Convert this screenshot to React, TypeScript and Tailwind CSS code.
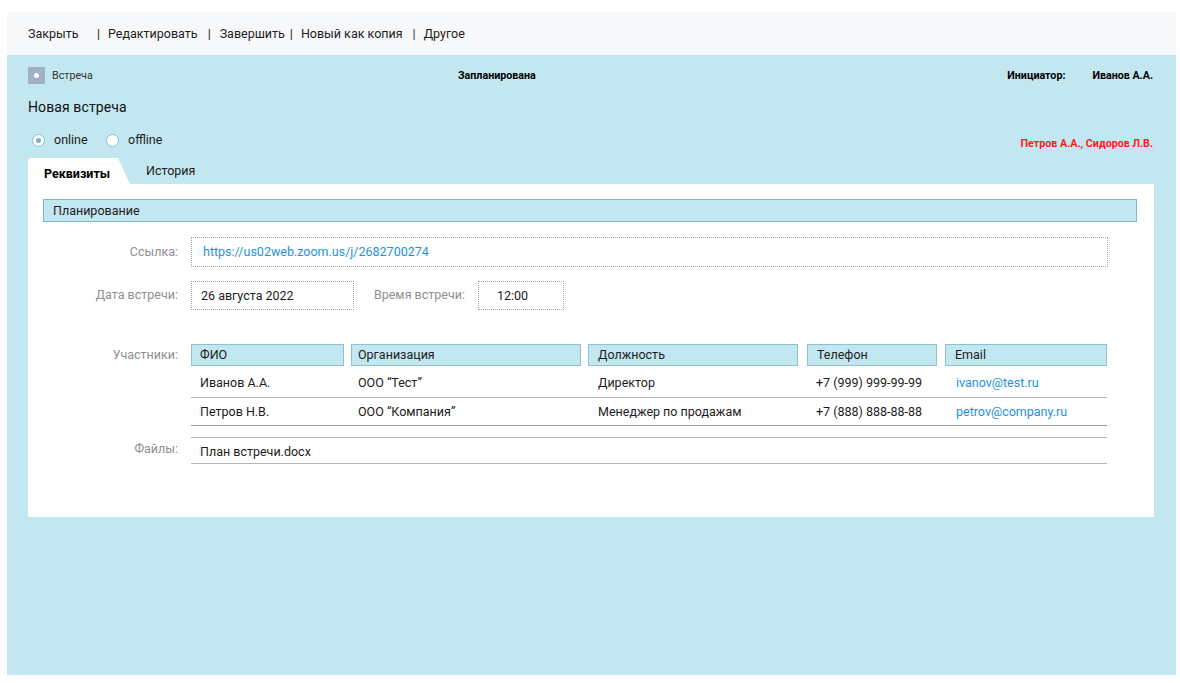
import React from "react";

const participants = [
  { name: "Иванов А.А.", org: "ООО “Тест”", role: "Директор", phone: "+7 (999) 999-99-99", email: "ivanov@test.ru", row: "h-[32px] pt-[4px] border-[#b5b5b5]" },
  { name: "Петров Н.В.", org: "ООО “Компания”", role: "Менеджер по продажам", phone: "+7 (888) 888-88-88", email: "petrov@company.ru", row: "h-[28px] pt-[1px] border-[#9e9e9e]" },
];

const columns = [
  { title: "ФИО", cls: "w-[153px] mr-[7px] pl-2" },
  { title: "Организация", cls: "w-[230px] mr-[7px] pl-[6px]" },
  { title: "Должность", cls: "w-[210px] mr-[9px] pl-[9px]" },
  { title: "Телефон", cls: "w-[130px] mr-2 pl-[9px]" },
  { title: "Email", cls: "w-[162px] pl-[9px]" },
];

const Label: React.FC<{ children: React.ReactNode; className?: string }> = ({ children, className }) => (
  <div className={`text-right text-[#8f8f8f] ${className ?? ""}`}>{children}</div>
);

const App: React.FC = () => {
  return (
    <div className="h-[683px] w-[1180px] bg-white pl-[7px] pr-1 pt-3 pb-2 flex flex-col font-['Roboto',sans-serif] text-[12.5px] text-[#1c1c1c]">
      {/* toolbar */}
      <div className="h-[43px] bg-[#f7f8fa] flex items-center pl-[21px] pt-[2px]">
        <span className="w-[69px] -mt-[1px]">Закрыть</span>
        <span>|</span>
        <span className="ml-2">Редактировать</span>
        <span className="ml-[10px]">|</span>
        <span className="ml-[9px]">Завершить</span>
        <span className="ml-[5px]">|</span>
        <span className="ml-2">Новый как копия</span>
        <span className="ml-[10px]">|</span>
        <span className="ml-2">Другое</span>
      </div>

      <div className="flex-1 bg-[#c3e7f1] pl-[21px] pr-[22px] flex flex-col">
        <div className="flex items-center h-[17px] mt-3 text-[10.7px]">
          <div className="w-[17px] h-[17px] rounded-[1px] bg-[#a0b0c6] flex items-center justify-center">
            <div className="w-[5px] h-[5px] rounded-full bg-white" />
          </div>
          <span className="ml-[7px] w-[406px] pt-[2px] text-[#333]">Встреча</span>
          <span className="pt-[2px] font-bold text-black">Запланирована</span>
          <span className="ml-auto pt-[2px] font-bold text-black">Инициатор:</span>
          <span className="ml-[27px] mr-[1px] pt-[2px] font-bold text-black">Иванов А.А.</span>
        </div>

        <div className="mt-[15px] h-[17px] leading-[17px] text-[14px] tracking-[0.1px] text-[#111]">Новая встреча</div>

        <div className="flex items-start mt-[17px] h-[25px]">
          <div className="flex items-center h-[14px] ml-1">
            <div className="w-[13px] h-[13px] rounded-full bg-white border border-[#7fc0d0] flex items-center justify-center">
              <div className="w-[5px] h-[5px] rounded-full bg-[#6fb6c8]" />
            </div>
            <span className="ml-[9px] w-[52px]">online</span>
            <div className="w-[13px] h-[13px] rounded-full bg-white border border-[#7fc0d0]" />
            <span className="ml-[9px]">offline</span>
          </div>
          <span className="ml-auto mr-[1px] mt-[3px] text-[10.7px] font-bold text-[#ff1a1a]">Петров А.А., Сидоров Л.В.</span>
        </div>

        {/* tabs */}
        <div className="flex h-[26px]">
          <div className="w-[102px] bg-white [clip-path:polygon(0_0,90px_0,102px_100%,0_100%)] rounded-tl-[3px] pl-4 pt-[7px] font-bold text-black leading-[17px]">
            Реквизиты
          </div>
          <div className="ml-4 pt-[5px] leading-[15px]">История</div>
        </div>

        <div className="h-[333px] bg-white pt-[15px] px-[15px]">
          <div className="w-[1094px] h-[23px] leading-[21px] bg-[#c3e7f1] border border-[#7fb9c9] pl-[9px]">Планирование</div>

          <div className="flex mt-[15px] h-[30px] items-center">
            <Label className="w-[135px]">Ссылка:</Label>
            <div className="ml-[13px] w-[917px] h-[30px] leading-[28px] border border-dotted border-[#a8a8a8] pl-[11px] text-[#1c93dc]">
              https://us02web.zoom.us/j/2682700274
            </div>
          </div>

          <div className="flex mt-[14px] h-[29px] items-center">
            <Label className="w-[135px]">Дата встречи:</Label>
            <div className="ml-[13px] w-[163px] h-[29px] leading-[27px] border border-dotted border-[#a8a8a8] pl-[9px]">26 августа 2022</div>
            <Label className="w-[111px]">Время встречи:</Label>
            <div className="ml-[13px] w-[86px] h-[29px] leading-[27px] border border-dotted border-[#a8a8a8] pl-[18px]">12:00</div>
          </div>

          <div className="flex mt-[34px]">
            <Label className="w-[135px] leading-[22px]">Участники:</Label>
            <div className="ml-[13px] w-[916px]">
              <div className="flex">
                {columns.map((c) => (
                  <div key={c.title} className={`h-[22px] leading-[20px] bg-[#c3e7f1] border border-[#8fc0cf] ${c.cls}`}>{c.title}</div>
                ))}
              </div>
              {participants.map((p) => (
                <div key={p.name} className={`grid grid-cols-[160px_237px_219px_138px_162px] items-center border-b ${p.row}`}>
                  <div className="pl-[9px]">{p.name}</div>
                  <div className="pl-[7px]">{p.org}</div>
                  <div className="pl-[10px]">{p.role}</div>
                  <div className="pl-[9px]">{p.phone}</div>
                  <div className="pl-[11px] text-[#1c93dc]">{p.email}</div>
                </div>
              ))}
            </div>
          </div>

          <div className="flex mt-[11px]">
            <Label className="w-[135px] leading-[23px]">Файлы:</Label>
            <div className="ml-[13px] w-[916px] h-[27px] border-y border-[#b5b5b5] pl-[9px] leading-[27px]">План встречи.docx</div>
          </div>
        </div>
      </div>
    </div>
  );
};

export default App;
